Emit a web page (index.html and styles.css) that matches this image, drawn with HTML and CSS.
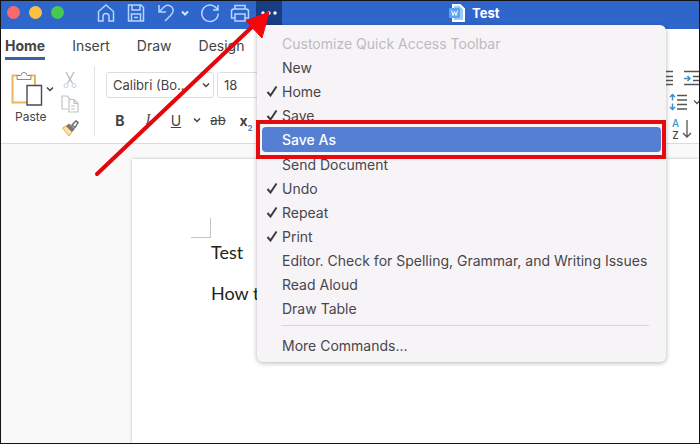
FILE: index.html
```
<!DOCTYPE html>
<html lang="en">

<head>
	<meta charset="utf-8">
	<meta name="viewport" content="width=device-width, initial-scale=1.0">
	<title>Test</title>
	<link rel="stylesheet" href="styles.css">
</head>

<body>
	<div class="window">
		<header class="titlebar">
			<div class="lights">
				<span class="light red"></span>
				<span class="light yellow"></span>
				<span class="light green"></span>
			</div>

			<div class="quick">
				<button class="tool" aria-label="Home"><svg width="20" height="20" viewBox="0 0 20 20"><path d="M2.500 8.500 10 2l7.500 6.500V18H13v-4.500a3 3 0 0 0-6 0V18H2.500z"/></svg></button>
				<button class="tool" aria-label="Save"><svg width="20" height="20" viewBox="0 0 20 20"><path d="M2.500 2h12.500l2.500 2.500V18h-15zM6 2v5h8V2M5.500 18v-7h9v7M8 14.500h4"/></svg></button>
				<button class="tool undo" aria-label="Undo"><svg width="20" height="20" viewBox="0 0 20 20"><path d="M3 2v7h7M3 9l5-5c3-3 8-1.500 9 2 .8 3-1 5-3 7l-5 5"/></svg></button>
				<button class="tool small" aria-label="Undo list"><svg width="10" height="10" viewBox="0 0 10 10"><path class="thick" d="M2 3.500 5 6.500l3-3"/></svg></button>
				<button class="tool" aria-label="Repeat"><svg width="20" height="20" viewBox="0 0 20 20"><path d="M18 2v5h-5M17.500 7A8.200 8.200 0 1 0 18.200 10.500"/></svg></button>
				<button class="tool" aria-label="Print"><svg width="20" height="20" viewBox="0 0 20 20"><path d="M5 6V2.500h10V6M5 15H1.500V8.500Q1.500 6 4 6h12q2.500 0 2.500 2.500V15H15M5 11h10v7H5z"/></svg></button>
			</div>

			<div class="more">
				<button class="more-btn" aria-label="Customize toolbar"><svg width="18" height="6" viewBox="0 0 18 6"><circle cx="3" cy="3" r="1.700"/><circle cx="9" cy="3" r="1.700"/><circle cx="15" cy="3" r="1.700"/></svg></button>

				<div class="menu" role="menu">
					<p class="item heading">Customize Quick Access Toolbar</p>
					<button class="item" role="menuitem">New</button>
					<button class="item checked" role="menuitem"><svg class="tick" width="12" height="12" viewBox="0 0 12 12"><path d="M1.500 7 4.500 10.500 10.500 1.500"/></svg>Home</button>
					<button class="item checked" role="menuitem"><svg class="tick" width="12" height="12" viewBox="0 0 12 12"><path d="M1.500 7 4.500 10.500 10.500 1.500"/></svg>Save</button>
					<button class="item active" role="menuitem">Save As</button>
					<button class="item" role="menuitem">Send Document</button>
					<button class="item checked" role="menuitem"><svg class="tick" width="12" height="12" viewBox="0 0 12 12"><path d="M1.500 7 4.500 10.500 10.500 1.500"/></svg>Undo</button>
					<button class="item checked" role="menuitem"><svg class="tick" width="12" height="12" viewBox="0 0 12 12"><path d="M1.500 7 4.500 10.500 10.500 1.500"/></svg>Repeat</button>
					<button class="item checked" role="menuitem"><svg class="tick" width="12" height="12" viewBox="0 0 12 12"><path d="M1.500 7 4.500 10.500 10.500 1.500"/></svg>Print</button>
					<button class="item" role="menuitem">Editor. Check for Spelling, Grammar, and Writing Issues</button>
					<button class="item" role="menuitem">Read Aloud</button>
					<button class="item" role="menuitem">Draw Table</button>
					<hr class="line">
					<button class="item" role="menuitem">More Commands...</button>
				</div>
			</div>

			<h1 class="doc-name">
				<svg width="16" height="18" viewBox="0 0 16 18"><path d="M4 1h7l4 4v12H4z" fill="#9cc9ff" stroke="#fff" stroke-width="2"/><rect x="0" y="4" width="11" height="10" rx="1" fill="#5ba4f0"/><path d="M2.500 6.500 4 11.500l1.500-4 1.500 4 1.500-5" fill="none" stroke="#fff"/></svg>
				Test
			</h1>
		</header>

		<nav class="tabs">
			<a href="#" class="tab current">Home</a>
			<a href="#" class="tab">Insert</a>
			<a href="#" class="tab">Draw</a>
			<a href="#" class="tab">Design</a>
		</nav>

		<section class="ribbon">
			<div class="clipboard">
				<button class="paste">
					<span class="paste-icon">
						<svg width="32" height="36" viewBox="0 0 32 36"><path d="M8 4.500H1.500v27H16M18 4.500h6V14" fill="none" stroke="#edb35f" stroke-width="2"/><path d="M6 8.500v-4h4q0-3 3-3t3 3h4v4z" fill="#fff" stroke="#8a8a8a"/><path d="M16 14.500h14.500V34H16z" fill="#fff" stroke="#4a4a4a" stroke-width="1.400"/></svg>
						<svg class="chev" width="10" height="10" viewBox="0 0 10 10"><path d="M2 3.500 5 6.500l3-3"/></svg>
					</span>
					Paste
				</button>
				<div class="clip-tools">
					<button aria-label="Cut"><svg width="18" height="18" viewBox="0 0 18 18" fill="none"><path d="M5 1l6.500 11.500M13 1 6.500 12.500" stroke="#b9b9b9" stroke-width="1.300"/><circle cx="5" cy="14.500" r="2" stroke="#b9d2e6"/><circle cx="13" cy="14.500" r="2" stroke="#b9d2e6"/></svg></button>
					<button aria-label="Copy"><svg width="18" height="18" viewBox="0 0 18 18" fill="none" stroke="#c2c2c2" stroke-width="1.200"><path d="M7 14H1V1h5l3 3M8 4.500h5l4 4V17H8zM13 4.500v4h4M10 11h4M10 14h4"/></svg></button>
					<button aria-label="Format painter"><svg width="18" height="18" viewBox="0 0 18 18"><path d="M1.500 9 5 7l6 6-3 4z" fill="#fce1b4" stroke="#e8a84c"/><path d="M5 7l3-2.500 6 5.500-3 3z" fill="#777"/><path d="M11 6l4-4 2 1.500-3 5z" fill="#fff" stroke="#666" stroke-width="1.400"/></svg></button>
				</div>
			</div>

			<div class="font-group">
				<div class="row">
					<label class="pick font-pick"><select aria-label="Font"><option>Calibri (Bo...</option></select><svg class="chev" width="10" height="10" viewBox="0 0 10 10"><path d="M2 3.500 5 6.500l3-3"/></svg></label>
					<label class="pick size-pick"><select aria-label="Font size"><option>18</option></select></label>
				</div>
				<div class="row formats">
					<button class="bold">B</button>
					<button class="italic">I</button>
					<button class="underline">U</button>
					<button class="narrow" aria-label="Underline style"><svg class="chev" width="10" height="10" viewBox="0 0 10 10"><path d="M2 3.500 5 6.500l3-3"/></svg></button>
					<button class="strike">ab</button>
					<button class="bold">x<sub>2</sub></button>
				</div>
			</div>

			<div class="para-group">
				<button aria-label="Indent"><svg width="33" height="18" viewBox="0 0 33 18"><path class="gray" d="M0 2.500h7M0 7.500h7M0 11.500h7M0 15.500h7M18 2.500h15M27 7.500h6M27 11.500h6M18 15.500h15"/><path class="blue" d="M18 9.500h6M21.500 7l2.500 2.500-2.500 2.500"/></svg></button>
				<button aria-label="Line spacing"><svg width="33" height="18" viewBox="0 0 33 18"><path class="blue" d="M6.500 1.500v6M4 4l2.500-2.500L9 4M6.500 10.500v6M4 14l2.500 2.500L9 14"/><path class="gray" d="M11 2.500h10M11 7h10M11 11.500h10M11 16h10M28 7.500l3 3 3-3"/></svg></button>
				<button aria-label="Sort" class="sort"><span class="letters"><b>A</b><b>Z</b></span><svg width="10" height="20" viewBox="0 0 10 20"><path class="gray" d="M5 1v17M1 14l4 4 4-4"/></svg></button>
			</div>
		</section>

		<main class="canvas">
			<article class="page">
				<span class="corner"></span>
				<p>Test</p>
				<p>How t</p>
			</article>
		</main>

		<svg class="arrow" width="180" height="170" viewBox="0 0 180 170"><path d="M4 167 160 19" stroke="#e3070b" stroke-width="4" stroke-linecap="round"/><path d="M176 5 153 14l16 17z" fill="#f5060a" stroke="#f5060a"/></svg>
	</div>
</body>

</html>
```
FILE: styles.css
```
* {
	box-sizing: border-box;
	margin: 0;
	padding: 0;
}

body {
	font-family: Inter, "Liberation Sans", sans-serif;
	font-size: 13px;
	color: #444;
}

button,
select {
	border: none;
	background: none;
	font: inherit;
	color: inherit;
}

svg {
	display: block;
	flex-shrink: 0;
}

.window {
	position: relative;
	display: flex;
	flex-direction: column;
	min-height: 100vh;
	border: 1px solid #141416;
	overflow: hidden;
	background: #fff;
}

/* title bar */
.titlebar {
	display: flex;
	align-items: flex-start;
	height: 28px;
	background: #2f66cb;
	color: #fff;
}

.lights {
	display: flex;
	gap: 9px;
	padding: 5px 0 0 6px;
	width: 95px;
}

.light {
	width: 13px;
	height: 13px;
	border-radius: 50%;
}

.red {
	background: #fb6a69;
}

.yellow {
	background: #fdc13f;
}

.green {
	background: #45cb50;
}

.quick {
	display: flex;
	align-items: center;
	gap: 10px;
	width: 160px;
	height: 23px;
}

.tool path {
	fill: none;
	stroke: #b5d4ff;
	stroke-width: 1.5;
}

.tool .thick {
	stroke: #d5e6ff;
	stroke-width: 2;
}

.undo {
	margin-right: -6px;
}

.more {
	position: relative;
}

.more-btn {
	display: flex;
	align-items: center;
	justify-content: center;
	width: 26px;
	height: 24px;
	background: #193d83;
}

.more-btn svg {
	fill: #fff;
}

.doc-name {
	display: flex;
	align-items: center;
	gap: 7px;
	margin-left: 167px;
	height: 24px;
	font-size: 13px;
	font-weight: 700;
}

/* drop-down menu */
.menu {
	position: absolute;
	top: 24px;
	left: 1px;
	z-index: 2;
	width: 409px;
	padding: 6px 5px 5px;
	border-radius: 6px;
	background: #f7f4f8;
	box-shadow: 0 1px 5px rgba(0, 0, 0, 0.3);
	font-size: 14px;
	color: #484649;
}

.item {
	position: relative;
	display: flex;
	align-items: center;
	width: 100%;
	height: 24px;
	padding-left: 20px;
	border-radius: 4px;
	white-space: nowrap;
}

.heading {
	color: #bdbabf;
}

.checked {
	padding-left: 4px;
	gap: 4px;
}

.tick path {
	fill: none;
	stroke: #3c3a3d;
	stroke-width: 2;
}

.active {
	height: 25px;
	background: #557fd3;
	color: #fff;
	font-weight: 500;
}

/* red frame round the chosen command */
.active::after {
	content: "";
	position: absolute;
	inset: -7px -5px -7px -6px;
	border: 4px solid #e60a0f;
}

.line {
	margin: 5px 12px 7px 19px;
	border: none;
	border-top: 1px solid #d8d5d9;
}

/* tabs */
.tabs {
	display: flex;
	gap: 27px;
	height: 33px;
	padding-left: 4px;
	font-size: 14px;
}

.tab {
	height: 31px;
	line-height: 33px;
	color: #444;
	text-decoration: none;
}

.current {
	border-bottom: 3px solid #3763a5;
	font-weight: 700;
}

/* ribbon */
.ribbon {
	display: flex;
	height: 82px;
	padding-top: 4px;
	border-bottom: 1px solid #dcdcdc;
}

.clipboard {
	display: flex;
	gap: 6px;
	width: 94px;
	height: 70px;
	padding-left: 10px;
	border-right: 1px solid #e2e2e2;
}

.paste {
	display: flex;
	flex-direction: column;
	align-items: flex-start;
	gap: 2px;
	padding-top: 5px;
	font-size: 12px;
	text-indent: 4px;
}

.paste-icon {
	display: flex;
	align-items: center;
	gap: 2px;
}

.chev path {
	fill: none;
	stroke: #444;
	stroke-width: 1.5;
}

.clip-tools {
	display: flex;
	flex-direction: column;
	gap: 6px;
	padding-top: 5px;
}

.font-group {
	padding: 6px 0 0 11px;
}

.row {
	display: flex;
	gap: 3px;
}

.pick {
	display: flex;
	align-items: center;
	height: 26px;
	border: 1px solid #dedede;
	border-radius: 3px;
	background: #fff;
}

.pick select {
	flex: 1;
	min-width: 0;
	height: 24px;
	padding-left: 6px;
	appearance: none;
}

.font-pick {
	width: 108px;
	padding-right: 2px;
}

.size-pick {
	width: 60px;
}

.formats {
	gap: 0;
	padding-top: 9px;
}

.formats button {
	display: flex;
	align-items: center;
	justify-content: center;
	width: 28px;
	height: 26px;
	font-size: 14px;
}

.formats .narrow {
	width: 14px;
}

.formats .bold {
	font-weight: 700;
}

.formats .italic {
	font-family: "Liberation Serif", serif;
	font-style: italic;
}

.formats .underline {
	text-decoration: underline;
}

.formats .strike {
	font-size: 13px;
	text-decoration: line-through;
}

.formats sub {
	align-self: flex-end;
	font-size: 8px;
	color: #3f87bf;
}

.para-group {
	display: flex;
	flex-direction: column;
	gap: 6px;
	width: 33px;
	margin-left: auto;
	padding-top: 3px;
}

.gray {
	fill: none;
	stroke: #555;
	stroke-width: 1.3;
}

.blue {
	fill: none;
	stroke: #3e91c9;
	stroke-width: 1.5;
}

.sort {
	display: flex;
	align-items: center;
	gap: 3px;
	padding-left: 6px;
}

.letters {
	display: grid;
	font-size: 10px;
	line-height: 12px;
}

.letters b {
	font-weight: 500;
}

.letters b:first-child {
	color: #3e91c9;
}

/* document */
.canvas {
	display: flex;
	flex: 1;
	padding: 15px 0 0 131px;
	background: #f9f9f9;
}

.page {
	flex: 1;
	padding: 59px 0 0 59px;
	background: #fff;
	box-shadow: 0 0 3px rgba(0, 0, 0, 0.25);
	font-family: Lato, "Liberation Sans", sans-serif;
	font-size: 18px;
	line-height: 28px;
	color: #222;
}

.corner {
	display: block;
	width: 20px;
	height: 20px;
	border-right: 1px solid #c4c4c4;
	border-bottom: 1px solid #c4c4c4;
}

.page p {
	padding-left: 20px;
	margin-bottom: 13px;
}

.arrow {
	position: absolute;
	top: 6px;
	left: 92px;
	z-index: 3;
	pointer-events: none;
}
```
